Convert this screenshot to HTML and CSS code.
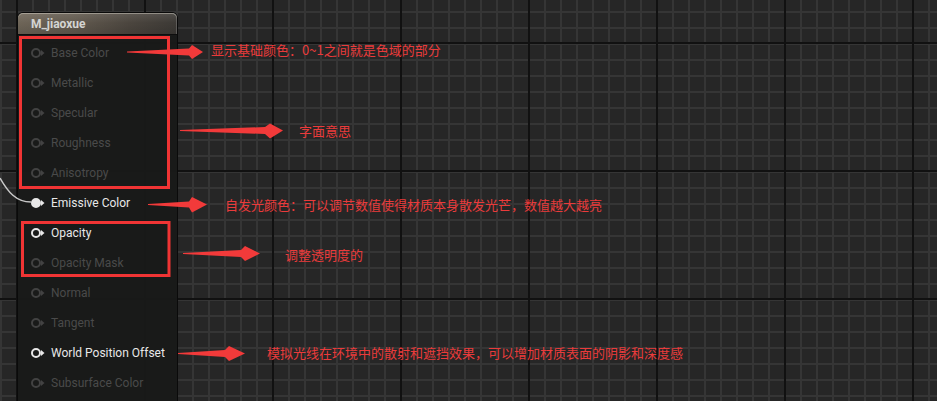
FILE: index.html
```html
<!DOCTYPE html>
<html lang="zh">
<head>
<meta charset="utf-8">
<title>M_jiaoxue</title>
<link rel="stylesheet" href="styles.css">
</head>
<body>
<main class="canvas">
  <section class="node">
    <header class="node-title">M_jiaoxue</header>
    <ul class="pins">
      <li class="pin off"><svg class="pin-icon" viewBox="0 0 14 10"><circle cx="5" cy="5" r="4"/><path d="M10 2 L13.5 5 L10 8Z"/></svg><span>Base Color</span></li>
      <li class="pin off"><svg class="pin-icon" viewBox="0 0 14 10"><circle cx="5" cy="5" r="4"/><path d="M10 2 L13.5 5 L10 8Z"/></svg><span>Metallic</span></li>
      <li class="pin off"><svg class="pin-icon" viewBox="0 0 14 10"><circle cx="5" cy="5" r="4"/><path d="M10 2 L13.5 5 L10 8Z"/></svg><span>Specular</span></li>
      <li class="pin off"><svg class="pin-icon" viewBox="0 0 14 10"><circle cx="5" cy="5" r="4"/><path d="M10 2 L13.5 5 L10 8Z"/></svg><span>Roughness</span></li>
      <li class="pin off"><svg class="pin-icon" viewBox="0 0 14 10"><circle cx="5" cy="5" r="4"/><path d="M10 2 L13.5 5 L10 8Z"/></svg><span>Anisotropy</span></li>
      <li class="pin on linked"><svg class="pin-icon" viewBox="0 0 14 10"><circle cx="5" cy="5" r="4"/><path d="M10 2 L13.5 5 L10 8Z"/></svg><span>Emissive Color</span></li>
      <li class="pin on"><svg class="pin-icon" viewBox="0 0 14 10"><circle cx="5" cy="5" r="4"/><path d="M10 2 L13.5 5 L10 8Z"/></svg><span>Opacity</span></li>
      <li class="pin off"><svg class="pin-icon" viewBox="0 0 14 10"><circle cx="5" cy="5" r="4"/><path d="M10 2 L13.5 5 L10 8Z"/></svg><span>Opacity Mask</span></li>
      <li class="pin off"><svg class="pin-icon" viewBox="0 0 14 10"><circle cx="5" cy="5" r="4"/><path d="M10 2 L13.5 5 L10 8Z"/></svg><span>Normal</span></li>
      <li class="pin off"><svg class="pin-icon" viewBox="0 0 14 10"><circle cx="5" cy="5" r="4"/><path d="M10 2 L13.5 5 L10 8Z"/></svg><span>Tangent</span></li>
      <li class="pin on"><svg class="pin-icon" viewBox="0 0 14 10"><circle cx="5" cy="5" r="4"/><path d="M10 2 L13.5 5 L10 8Z"/></svg><span>World Position Offset</span></li>
      <li class="pin off"><svg class="pin-icon" viewBox="0 0 14 10"><circle cx="5" cy="5" r="4"/><path d="M10 2 L13.5 5 L10 8Z"/></svg><span>Subsurface Color</span></li>
    </ul>
  </section>

  <svg class="overlay" viewBox="0 0 937 401" width="937" height="401">
    <path class="wire" d="M0 178 C 8 192, 16 202, 31 202"/>
    <rect class="mark" x="20.5" y="37.5" width="148" height="150"/>
    <rect class="mark" x="22.5" y="222.5" width="146.5" height="53"/>
    <polygon class="arrow" points="127,51.6 189,48.5 192,45 203,52 192,59 189,55.5 127,52.4"/>
    <polygon class="arrow" points="180,130 265,127 270,123.5 283,130.5 270,138.5 265,134 180,131"/>
    <polygon class="arrow" points="148,204 189,201.5 192,197 207,204.5 192,212.5 189,207.5 148,205"/>
    <polygon class="arrow" points="183,253 241,250 245,246 260,253.5 245,261 241,257 183,254"/>
    <polygon class="arrow" points="178,353 225,350 229,346 245,353.5 229,361 225,357 178,354"/>
  </svg>

  <p class="note n1">显示基础颜色：0~1之间就是色域的部分</p>
  <p class="note n2">字面意思</p>
  <p class="note n3">自发光颜色：可以调节数值使得材质本身散发光芒，数值越大越亮</p>
  <p class="note n4">调整透明度的</p>
  <p class="note n5">模拟光线在环境中的散射和遮挡效果，可以增加材质表面的阴影和深度感</p>
</main>
</body>
</html>
```

FILE: styles.css
```css
html, body {
  margin: 0;
  padding: 0;
  background: #262626;
}

.canvas {
  position: relative;
  width: 937px;
  height: 401px;
  overflow: hidden;
  box-sizing: border-box;
  padding: 12px 0 0 17px;
  background-color: #262626;
  background-image:
    linear-gradient(90deg, #111 0 2px, transparent 2px),
    linear-gradient(#111 0 2px, transparent 2px),
    linear-gradient(90deg, #353535 0 2px, transparent 2px),
    linear-gradient(#353535 0 2px, transparent 2px);
  background-size: 128px 100%, 100% 128px, 16px 100%, 100% 16px;
  background-position: 16px 0, 0 42px, 0 0, 0 11px;
  font-family: Roboto, "Noto Sans", "Liberation Sans", sans-serif;
}

.node {
  width: 161px;
  box-sizing: border-box;
  border: 1px solid #0a0a0a;
  border-radius: 6px 6px 0 0;
  background: rgba(25, 26, 25, 0.97);
}

.node-title {
  height: 22px;
  box-sizing: border-box;
  padding-left: 13px;
  line-height: 22px;
  font-size: 12px;
  font-weight: 700;
  color: #d4d4d2;
  border-radius: 5px 5px 0 0;
  border-bottom: 1px solid #0e0e0e;
  background:
    linear-gradient(180deg, rgba(255,255,255,0.10) 0%, rgba(255,255,255,0) 45%, rgba(0,0,0,0.12) 100%),
    linear-gradient(90deg, #6e6558 0%, #625a4f 35%, #4c463f 70%, #3d3a36 100%);
  box-shadow: inset 0 1px 0 rgba(220, 215, 205, 0.45), inset -1px 0 0 rgba(160, 160, 160, 0.35);
}

.pins {
  list-style: none;
  margin: 0;
  padding: 3px 0 8px;
}

.pin {
  height: 30px;
  display: flex;
  align-items: center;
  gap: 6px;
  padding-left: 13px;
  font-size: 12px;
}

.pin-icon {
  width: 14px;
  height: 10px;
  flex: none;
}

.pin-icon circle {
  fill: none;
  stroke: currentColor;
  stroke-width: 2;
}

.pin-icon path {
  fill: currentColor;
}

.pin.off {
  color: #424242;
}

.pin.off span {
  color: #4a4a4a;
}

.pin.on {
  color: #e8e8e8;
}

.pin.linked .pin-icon circle {
  fill: currentColor;
}

.overlay {
  position: absolute;
  left: 0;
  top: 0;
  pointer-events: none;
}

.wire {
  fill: none;
  stroke: #c9c9c9;
  stroke-width: 1.5;
}

.mark {
  fill: none;
  stroke: #f03434;
  stroke-width: 3;
}

.arrow {
  fill: #f23a3a;
}

.note {
  position: absolute;
  margin: 0;
  line-height: 18px;
  font-size: 13px;
  white-space: nowrap;
  color: #ea3b3b;
  font-family: "Noto Sans CJK SC", "Noto Sans", sans-serif;
}

.n1 { left: 211px; top: 41px; }
.n2 { left: 299px; top: 122px; }
.n3 { left: 225px; top: 196px; }
.n4 { left: 285px; top: 246px; }
.n5 { left: 267px; top: 344px; }
```
